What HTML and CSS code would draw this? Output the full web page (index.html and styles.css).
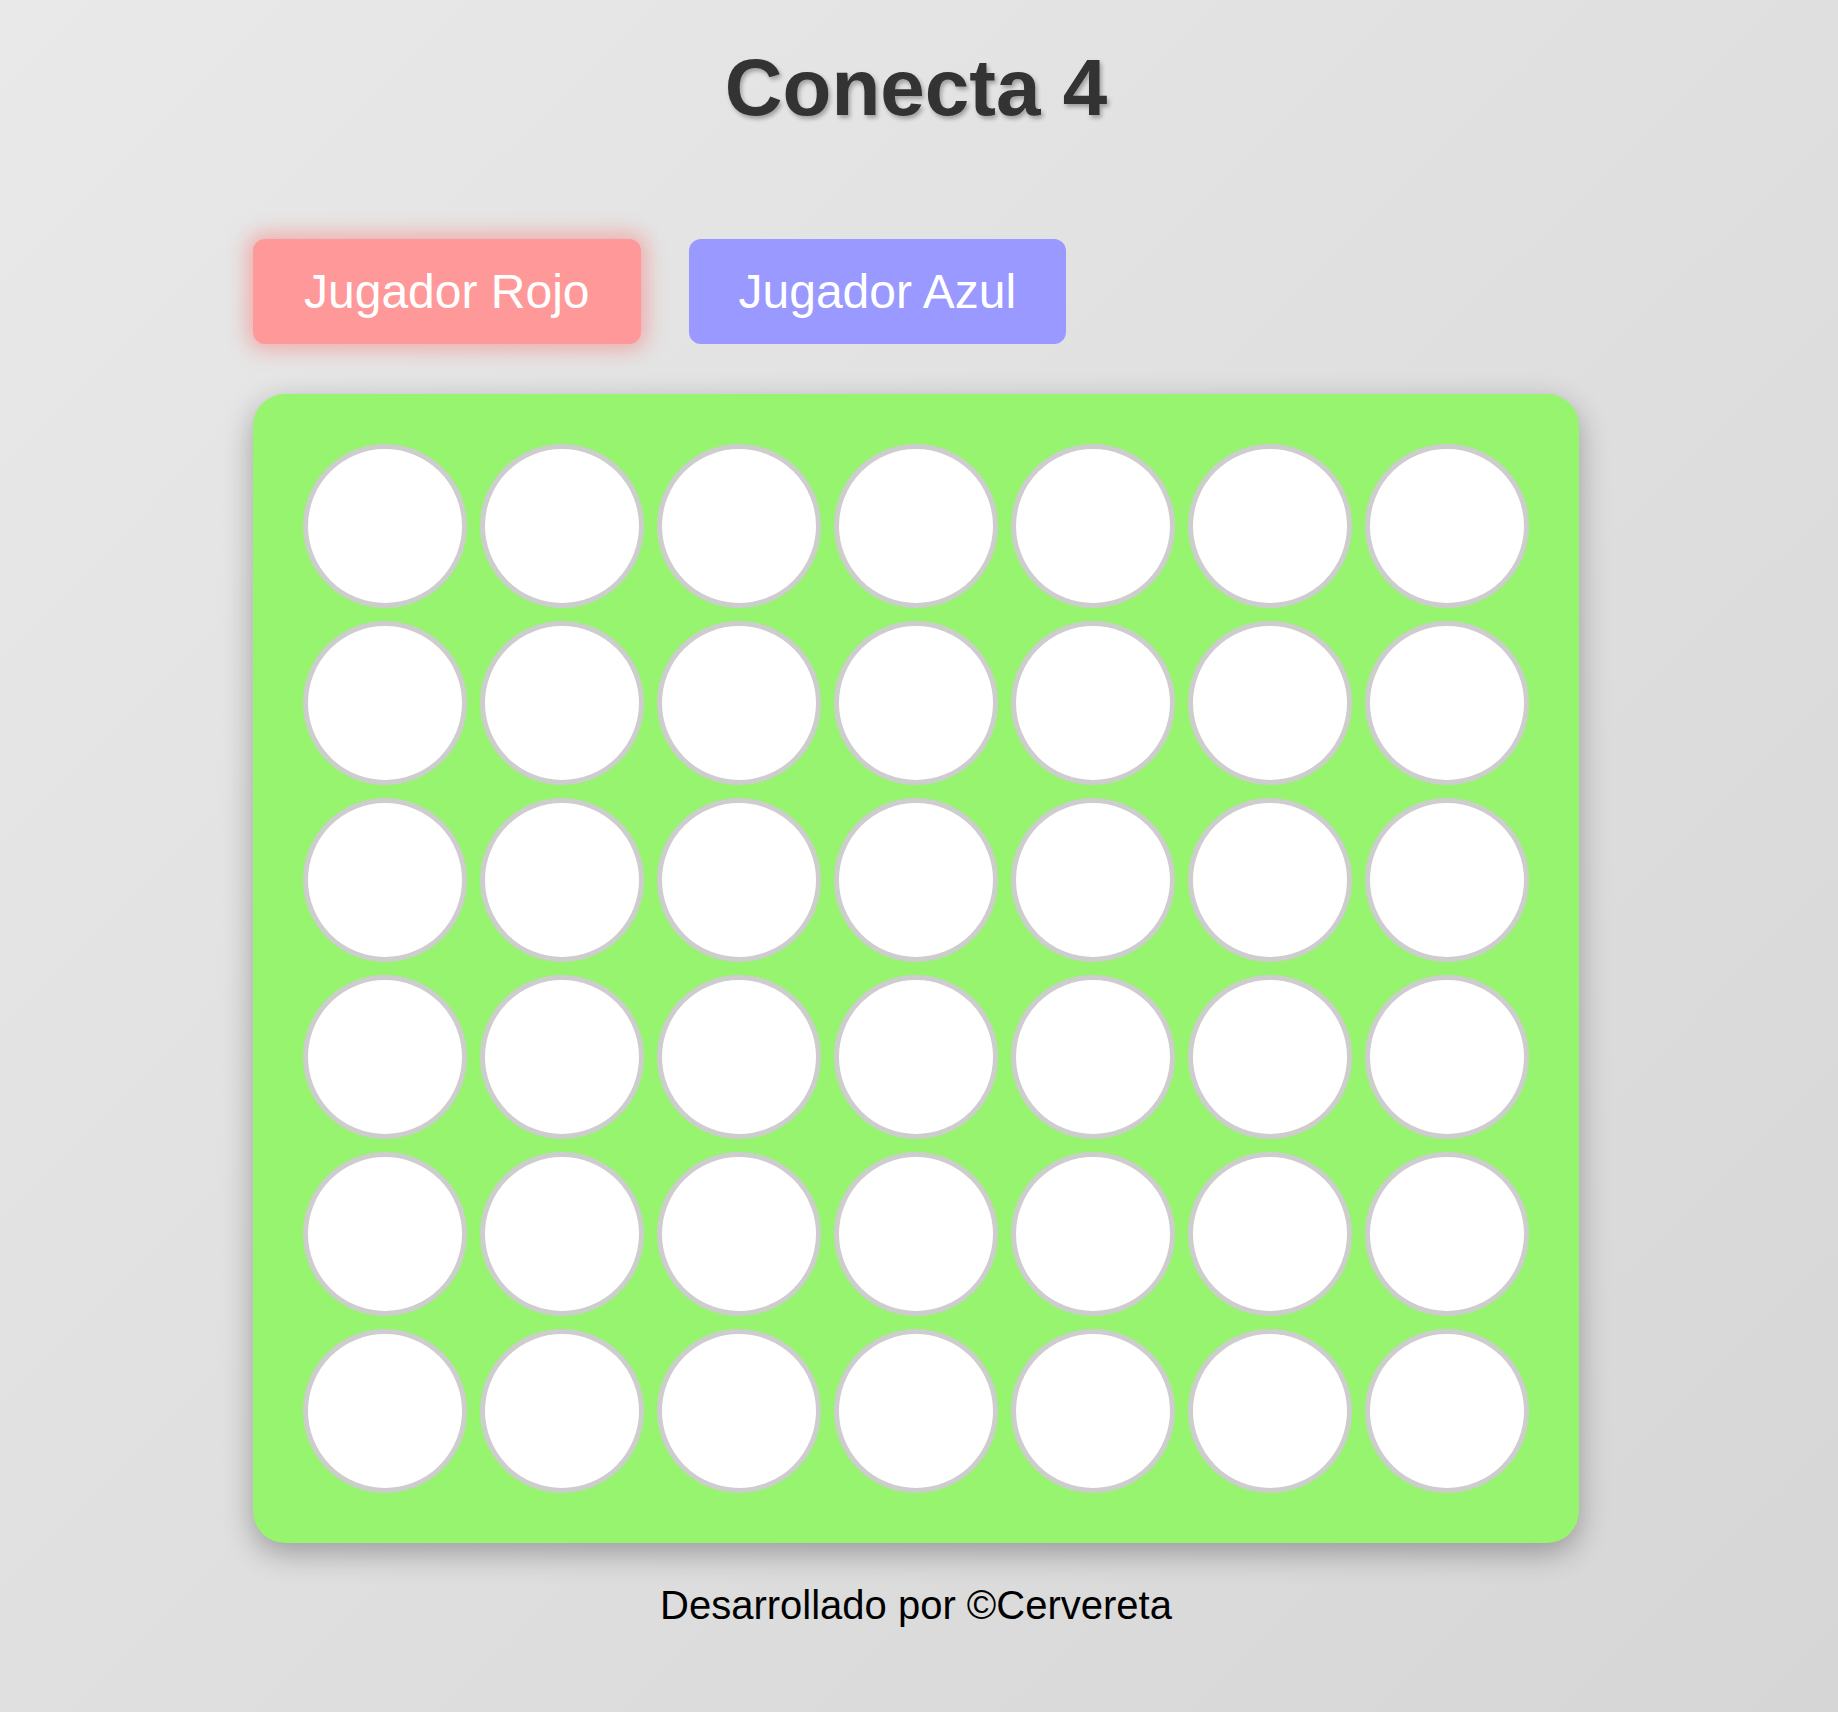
FILE: index.html
```html
<!DOCTYPE html>
<html lang="es">
<head>
<meta charset="utf-8">
<title>Conecta 4</title>
<link rel="stylesheet" href="styles.css">
</head>
<body>
<main class="game">
  <h1 class="title">Conecta 4</h1>
  <div class="players">
    <button class="player player-red active">Jugador Rojo</button>
    <button class="player player-blue">Jugador Azul</button>
  </div>
  <div class="board">
    <div class="cell"></div><div class="cell"></div><div class="cell"></div><div class="cell"></div><div class="cell"></div><div class="cell"></div><div class="cell"></div>
    <div class="cell"></div><div class="cell"></div><div class="cell"></div><div class="cell"></div><div class="cell"></div><div class="cell"></div><div class="cell"></div>
    <div class="cell"></div><div class="cell"></div><div class="cell"></div><div class="cell"></div><div class="cell"></div><div class="cell"></div><div class="cell"></div>
    <div class="cell"></div><div class="cell"></div><div class="cell"></div><div class="cell"></div><div class="cell"></div><div class="cell"></div><div class="cell"></div>
    <div class="cell"></div><div class="cell"></div><div class="cell"></div><div class="cell"></div><div class="cell"></div><div class="cell"></div><div class="cell"></div>
    <div class="cell"></div><div class="cell"></div><div class="cell"></div><div class="cell"></div><div class="cell"></div><div class="cell"></div><div class="cell"></div>
  </div>
  <footer class="footer">Desarrollado por ©Cervereta</footer>
</main>
</body>
</html>
```

FILE: styles.css
```css
html, body {
  margin: 0;
  padding: 0;
}

body {
  min-height: 100vh;
  background: linear-gradient(135deg, #e9e9e9 0%, #d6d6d6 100%);
  font-family: "Liberation Sans", Arial, sans-serif;
  padding-right: 6px;
  box-sizing: border-box;
}

.game {
  display: flex;
  flex-direction: column;
  align-items: center;
}

.title {
  margin: 42px 0 0;
  font-size: 80px;
  font-weight: bold;
  line-height: 92px;
  color: #333333;
  text-shadow: 2px 3px 4px rgba(0, 0, 0, 0.3);
}

.players {
  width: 1326px;
  display: flex;
  gap: 48px;
  margin-top: 105px;
}

.player {
  font-family: "Liberation Sans", Arial, sans-serif;
  font-size: 48px;
  line-height: 55px;
  color: #ffffff;
  border: none;
  border-radius: 12px;
  padding: 25px 51px;
  cursor: pointer;
}

.player-red {
  background: #ff9999;
}

.player-blue {
  background: #9999ff;
  padding: 25px 50px;
}

.player.active {
  box-shadow: 0 0 20px 6px rgba(255, 90, 90, 0.4);
}

.board {
  margin-top: 50px;
  width: 1326px;
  box-sizing: border-box;
  padding: 50px;
  background: #96f46e;
  border-radius: 32px;
  display: grid;
  grid-template-columns: repeat(7, 164px);
  grid-auto-rows: 164px;
  gap: 13px;
  box-shadow: 0 10px 30px rgba(0, 0, 0, 0.3);
}

.cell {
  box-sizing: border-box;
  border: 5px solid #cdcdcd;
  border-radius: 50%;
  background: #ffffff;
}

.footer {
  margin-top: 39px;
  font-size: 40px;
  line-height: 46px;
  color: #000000;
}
```
